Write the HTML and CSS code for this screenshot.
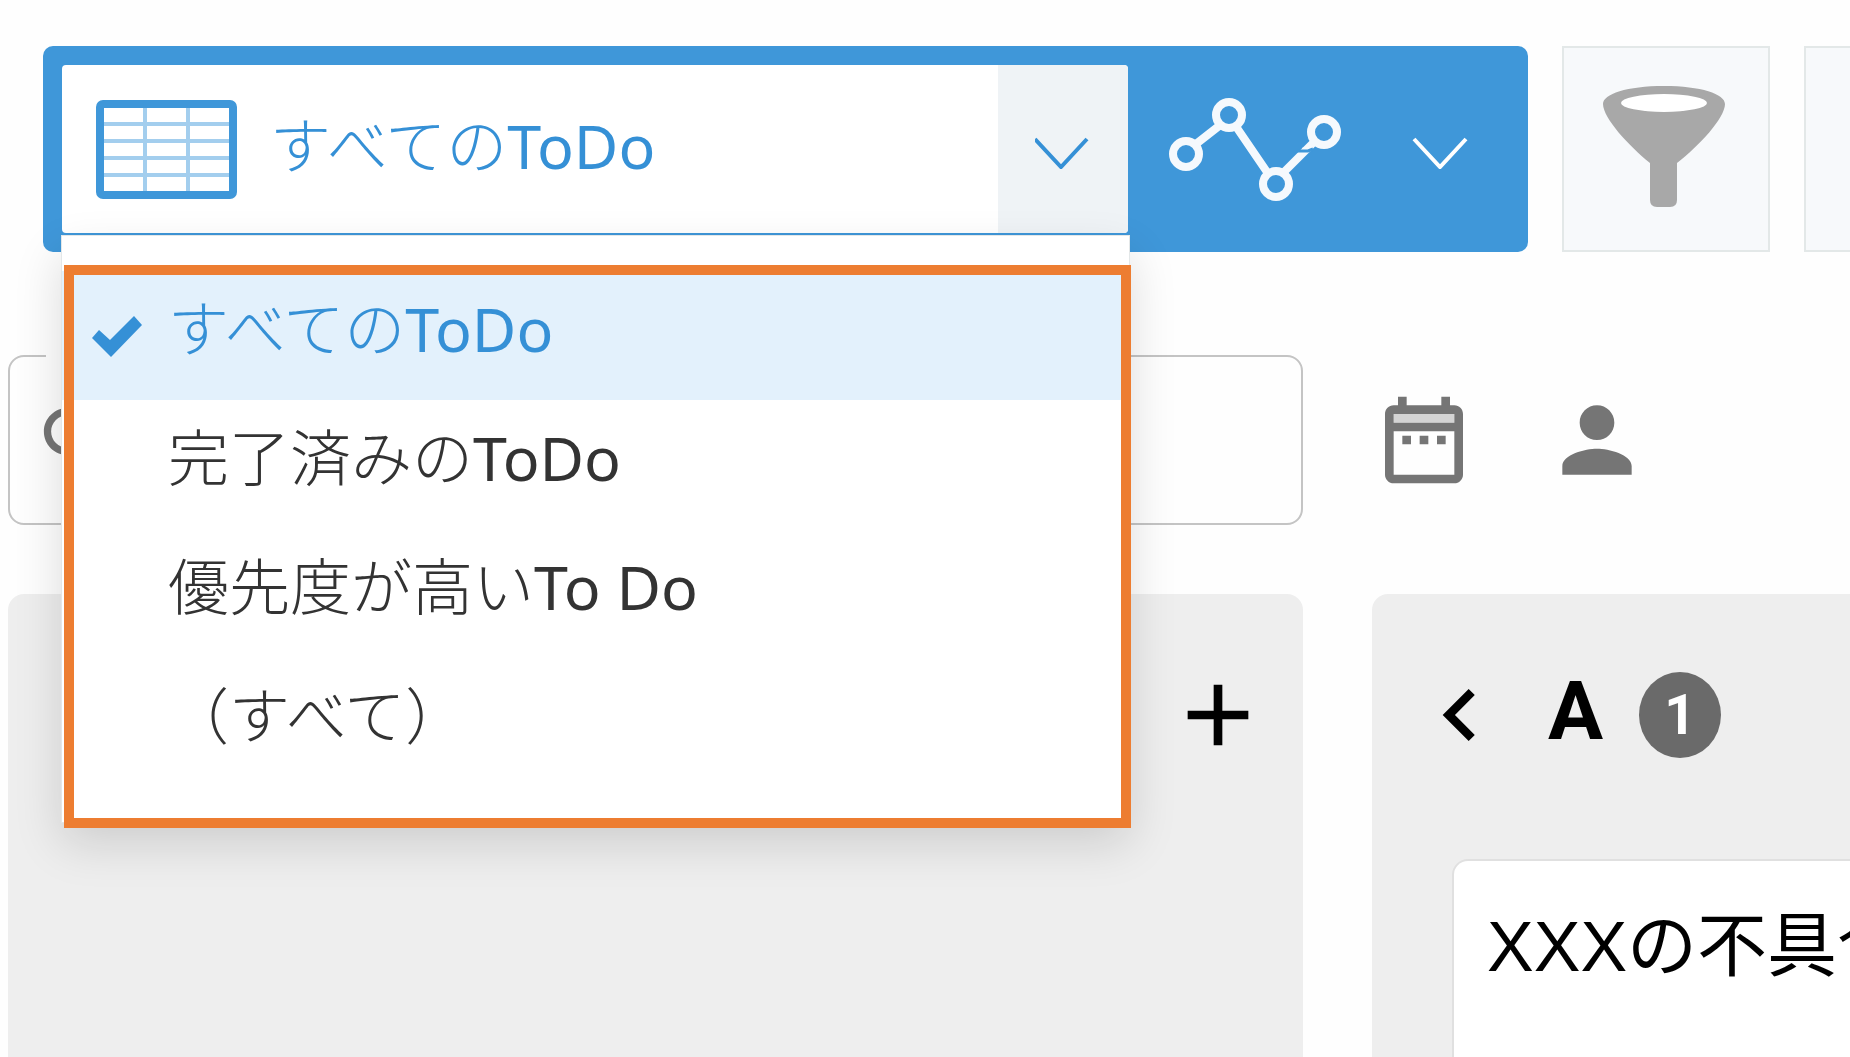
FILE: index.html
```html
<!DOCTYPE html>
<html lang="ja">
<head>
  <meta charset="UTF-8" />
  <meta name="viewport" content="width=device-width, initial-scale=1" />
  <title>ToDo</title>
  <link rel="stylesheet" href="styles.css">
</head>
<body>

  <header class="toolbar">
    <div class="view-bar">
      <div class="view-select">
        <button class="view-current" type="button">
          <svg class="icon-table" viewBox="0 0 141 99" aria-hidden="true">
            <path d="M49 8V91M92 8V91M8 24H133M8 41H133M8 58H133M8 75H133" stroke="#a3ceee" stroke-width="4" />
            <rect x="4" y="4" width="133" height="91" rx="3" fill="none" stroke="#3f97d9" stroke-width="8" />
          </svg>
          <span class="view-name">すべての<span class="latin">ToDo</span></span>
        </button>
        <button class="view-toggle" type="button" aria-label="一覧を選択" aria-expanded="true">
          <svg class="icon-caret" viewBox="0 0 56 40" aria-hidden="true">
            <path d="M0 10L26 38L52 10" fill="none" stroke="currentColor" stroke-width="4" />
          </svg>
        </button>

        <div class="view-menu">
          <ul class="view-list">
            <li>
              <button class="view-item selected" type="button">
                <svg class="icon-check" viewBox="0 0 50 42" aria-hidden="true">
                  <path d="M0 23L7 15L18 25L42 1L50 10L19 42Z" fill="#3590d6" />
                </svg>
                <span class="item-name">すべての<span class="latin">ToDo</span></span>
              </button>
            </li>
            <li><button class="view-item" type="button"><span class="item-name">完了済みの<span class="latin">ToDo</span></span></button></li>
            <li><button class="view-item" type="button"><span class="item-name">優先度が高い<span class="latin">To Do</span></span></button></li>
            <li><button class="view-item" type="button"><span class="item-name">（すべて）</span></button></li>
          </ul>
          <div class="highlight"></div>
        </div>
      </div>

      <button class="chart-button" type="button" aria-label="グラフ">
        <svg class="icon-chart" viewBox="0 0 180 110" aria-hidden="true">
          <g fill="none" stroke="#f5f9fd" stroke-width="8">
            <path d="M31 50L54 32M72 34L102 78M119 78L149 48" />
            <circle cx="21" cy="60" r="13" />
            <circle cx="64" cy="21" r="13" />
            <circle cx="111" cy="90" r="13" />
            <circle cx="159" cy="38" r="13" />
          </g>
          <path d="M137 54L146 50V55H137Z" fill="#f5f9fd" />
          <path d="M132 57H143L148 55" fill="none" stroke="#3f97d9" stroke-width="3" />
        </svg>
        <svg class="icon-caret" viewBox="0 0 56 40" aria-hidden="true">
          <path d="M2 10L28 38L54 10" fill="none" stroke="currentColor" stroke-width="4" />
        </svg>
      </button>
    </div>

    <button class="tool-button" type="button" aria-label="絞り込む">
      <svg class="icon-funnel" viewBox="0 0 128 128" aria-hidden="true">
        <path d="M1 19C1 9 25 1 62 1S123 9 123 19C123 33 97 61 75 78V115Q75 122 68 122H55Q48 122 48 115V78C27 61 1 33 1 19Z" fill="#a8a8a8" />
        <ellipse cx="62" cy="18" rx="43" ry="9" fill="#fff" />
      </svg>
    </button>
    <button class="tool-button" type="button" aria-label="グラフを作成"></button>
  </header>

  <main>
    <div class="filters">
      <fieldset class="search">
        <legend></legend>
        <svg class="icon-search" viewBox="0 0 24 24" aria-hidden="true">
          <path d="M15.5 14h-.79l-.28-.27C15.41 12.59 16 11.11 16 9.5 16 5.91 13.09 3 9.5 3S3 5.91 3 9.5 5.91 16 9.5 16c1.61 0 3.09-.59 4.23-1.57l.27.28v.79l5 4.99L20.49 19l-4.99-5zm-6 0C7.01 14 5 11.99 5 9.5S7.01 5 9.5 5 14 7.01 14 9.5 11.99 14 9.5 14z" />
        </svg>
        <input class="search-input" type="text" aria-label="検索">
      </fieldset>
      <button class="icon-button" type="button" aria-label="期間">
        <svg class="icon" viewBox="0 0 24 24" aria-hidden="true">
          <path d="M5 6h14v2H5z" opacity=".3" />
          <path d="M19 4h-1V2h-2v2H8V2H6v2H5c-1.1 0-2 .9-2 2v14c0 1.1.9 2 2 2h14c1.1 0 2-.9 2-2V6c0-1.1-.9-2-2-2zm0 16H5V10h14v10zm0-12H5V6h14v2zM7 11h2v2H7zM11 11h2v2h-2zM15 11h2v2h-2z" />
        </svg>
      </button>
      <button class="icon-button" type="button" aria-label="担当者">
        <svg class="icon" viewBox="0 0 24 24" aria-hidden="true">
          <path d="M12 12c2.21 0 4-1.79 4-4s-1.79-4-4-4-4 1.79-4 4 1.79 4 4 4zm0 2c-2.67 0-8 1.34-8 4v2h16v-2c0-2.66-5.33-4-8-4z" />
        </svg>
      </button>
    </div>

    <div class="board">
      <section class="column">
        <div class="column-head column-head-end">
          <button class="icon-button dark" type="button" aria-label="追加">
            <svg class="icon" viewBox="0 0 24 24" aria-hidden="true">
              <path d="M19 13h-6v6h-2v-6H5v-2h6V5h2v6h6v2z" />
            </svg>
          </button>
        </div>
      </section>

      <section class="column">
        <div class="column-head">
          <button class="icon-button dark" type="button" aria-label="前へ">
            <svg class="icon" viewBox="0 0 24 24" aria-hidden="true">
              <path d="M15.41 7.41L14 6l-6 6 6 6 1.41-1.41L10.83 12z" />
            </svg>
          </button>
          <h2 class="column-title">A</h2>
          <span class="count">1</span>
        </div>
        <article class="card">XXXの不具合</article>
      </section>
    </div>
  </main>

</body>
</html>
```

FILE: styles.css
```css
* {
  box-sizing: border-box;
}

body {
  margin: 0;
  height: 100vh;
  display: flex;
  flex-direction: column;
  overflow: hidden;
  background-color: #fefefe;
  font-family: "Noto Sans", "Noto Sans CJK JP", sans-serif;
  color: #333;
}

button {
  margin: 0;
  padding: 0;
  border: 0;
  background: none;
  color: inherit;
  font: inherit;
  cursor: pointer;
}

svg {
  display: block;
  flex-shrink: 0;
}

/* Toolbar */
.toolbar {
  display: flex;
  gap: 34px;
  padding: 46px 0 0 43px;
}

.view-bar {
  flex: 0 0 calc(100% - 322px);
  display: flex;
  height: 206px;
  padding: 19px 0 19px 19px;
  background-color: #3f97d9;
  border-radius: 10px;
}

.view-select {
  position: relative;
  flex: 1;
  display: flex;
  background-color: #fff;
  border-radius: 4px;
}

.view-current {
  flex: 1;
  display: flex;
  align-items: center;
  gap: 33px;
  padding-left: 34px;
  color: #3590d6;
  font-size: 61px;
  font-weight: 300;
  line-height: 80px;
}

.view-name {
  padding-bottom: 6px;
}

.latin {
  font-weight: 400;
}

.view-toggle {
  width: 130px;
  display: flex;
  align-items: center;
  justify-content: center;
  background-color: #eff3f6;
  border-radius: 0 4px 4px 0;
  color: #3590d6;
}

.icon-table {
  width: 141px;
  height: 99px;
}

.icon-caret {
  width: 56px;
  height: 40px;
}

.chart-button {
  width: 400px;
  display: flex;
  align-items: center;
  gap: 67px;
  padding-left: 37px;
  color: #fff;
}

.icon-chart {
  width: 180px;
  height: 110px;
}

.tool-button {
  flex: 0 0 208px;
  height: 206px;
  display: flex;
  align-items: center;
  justify-content: center;
  background-color: #f7f9fb;
  border: 2px solid #e3e8e8;
}

.icon-funnel {
  width: 128px;
  height: 128px;
}

/* View menu */
.view-menu {
  position: absolute;
  z-index: 10;
  top: calc(100% + 2px);
  left: -1px;
  right: -2px;
  padding: 35px 0;
  background-color: #fff;
  border: 1px solid #e3e7e8;
  box-shadow: 0 20px 45px rgba(0, 0, 0, 0.14);
}

.view-list {
  margin: 0;
  padding: 0;
  list-style: none;
}

.view-item {
  width: 100%;
  height: 129px;
  display: flex;
  align-items: center;
  padding-left: 106px;
  font-size: 61px;
  font-weight: 300;
  line-height: 80px;
}

.view-item.selected {
  gap: 26px;
  padding-left: 30px;
  background-color: #e3f1fc;
  color: #3590d6;
}

.item-name {
  padding-bottom: 14px;
}

.icon-check {
  width: 50px;
  height: 42px;
}

.highlight {
  position: absolute;
  top: 29px;
  right: -2px;
  bottom: -6px;
  left: 2px;
  border: 10px solid #ed7d31;
  pointer-events: none;
}

/* Search and filters */
main {
  flex: 1;
  display: flex;
  flex-direction: column;
  gap: 69px;
  padding: 103px 0 0 8px;
}

.filters {
  display: flex;
  align-items: center;
  gap: 69px;
}

.search {
  flex: 0 0 70vw;
  height: 170px;
  display: flex;
  align-items: center;
  margin: 0;
  padding: 0 23px;
  border: 2px solid #c4c4c4;
  border-radius: 16px;
}

.search legend {
  width: 200px;
  height: 2px;
  margin-left: 13px;
  padding: 0;
}

.icon-search {
  width: 87px;
  height: 87px;
  fill: #757575;
}

.search-input {
  flex: 1;
  height: 100px;
  border: 0;
  background: none;
  font: inherit;
}

.icon-button {
  fill: #757575;
}

.icon-button.dark {
  fill: #000;
}

.icon {
  width: 104px;
  height: 104px;
}

/* Board */
.board {
  flex: 1;
  display: flex;
  gap: 69px;
}

.column {
  flex: 0 0 70vw;
  display: flex;
  flex-direction: column;
  background-color: #eee;
  border-radius: 16px 16px 0 0;
}

.column-head {
  display: flex;
  align-items: center;
  gap: 36px;
  padding: 69px 33px 0 36px;
}

.column-head-end {
  justify-content: flex-end;
}

.column-title {
  margin: 0;
  padding-bottom: 8px;
  color: #000;
  font-family: Roboto, sans-serif;
  font-size: 82px;
  font-weight: 700;
  line-height: 96px;
}

.count {
  width: 82px;
  height: 86px;
  border-radius: 50%;
  background-color: #6a6a6a;
  color: #fff;
  font-family: Roboto, sans-serif;
  font-size: 55px;
  font-weight: 700;
  line-height: 86px;
  text-align: center;
}

.card {
  flex: 1;
  margin: 92px 80px 0;
  padding: 34px 33px;
  background-color: #fff;
  border: 2px solid #e0e0e0;
  border-bottom: 0;
  border-radius: 16px 16px 0 0;
  color: #000;
  font-family: "Liberation Sans", "Noto Sans CJK JP", sans-serif;
  font-size: 70px;
  line-height: 104px;
}
```
